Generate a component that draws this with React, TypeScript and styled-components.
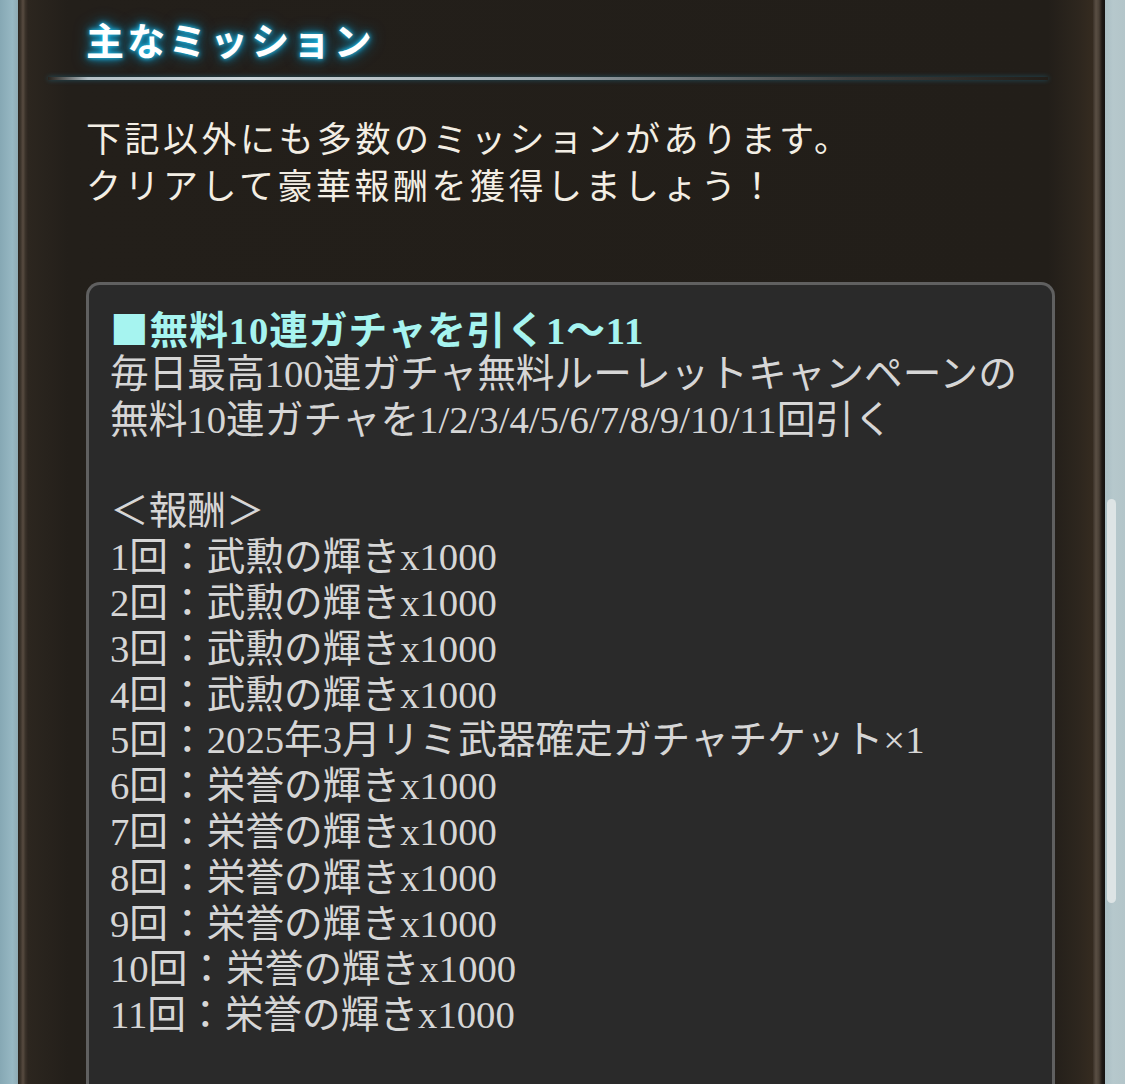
import React from "react";
import styled, { createGlobalStyle } from "styled-components";

const Global = createGlobalStyle`
  html, body { margin: 0; padding: 0; background: #221e19; }
  body { overflow: hidden; }
`;

const Page = styled.div`
  display: flex;
  width: 1125px;
  height: 1084px;
  overflow: hidden;
`;

const SideStrip = styled.div<{ $side: "left" | "right" }>`
  position: relative;
  flex: 0 0 ${(p) => (p.$side === "left" ? "18px" : "20px")};
  background: ${(p) =>
    p.$side === "left"
      ? "linear-gradient(90deg, #86a8b4 0%, #97b8c3 70%, #8eaab3 100%)"
      : "linear-gradient(90deg, #a9bec4 0%, #b6c8cc 40%, #b3c5c9 100%)"};
`;

const Thumb = styled.div`
  position: absolute;
  left: 2px;
  top: 499px;
  width: 9px;
  height: 404px;
  border-radius: 5px;
  background: #dde4e5;
`;

const FrameEdge = styled.div<{ $side: "left" | "right" }>`
  flex: 0 0 ${(p) => (p.$side === "left" ? "10px" : "12px")};
  background: ${(p) =>
    p.$side === "left"
      ? "linear-gradient(90deg, #2a241e 0%, #3b332a 25%, #574b40 50%, #3a3229 75%, #2c251f 100%)"
      : "linear-gradient(90deg, #3a3128 0%, #5a4f44 25%, #4a4036 50%, #1f1a16 75%, #141210 100%)"};
`;

const Main = styled.div`
  flex: 1;
  display: flex;
  flex-direction: column;
  background: linear-gradient(
    90deg,
    #2c261f 0px,
    #231f1a 40px,
    #221e19 1020px,
    #2d261e 1050px,
    #352b20 1065px
  );
  padding-left: 58px;
  font-family: "Noto Sans CJK JP", "Noto Sans", sans-serif;
`;

const Title = styled.h2`
  margin: 13px 0 0 0;
  font-size: 38px;
  line-height: 52px;
  font-weight: 700;
  letter-spacing: 3.3px;
  color: #ffffff;
  text-shadow: 0 0 4px #29c6f2, 0 0 9px #0e9fd0, 0 0 16px #0a7fae;
`;

const GlowLine = styled.div`
  margin: 12px 0 0 -38px;
  width: 1000px;
  height: 3px;
  background: linear-gradient(
    90deg,
    rgba(200, 210, 216, 0) 0%,
    #b4c0c6 4%,
    #cdd6da 20%,
    #9aa6ac 50%,
    rgba(90, 96, 100, 0.5) 80%,
    rgba(60, 60, 60, 0) 100%
  );
  box-shadow: 0 0 5px rgba(30, 150, 200, 0.45);
`;

const Intro = styled.p`
  margin: 33px 0 0 0;
  font-size: 35px;
  line-height: 47px;
  letter-spacing: 3.5px;
  color: #f3eee4;
`;

const Card = styled.div`
  margin-top: 75px;
  width: 969px;
  flex: 1;
  box-sizing: border-box;
  border: 3px solid #606060;
  border-bottom: none;
  border-radius: 14px 14px 0 0;
  background: #2a2a2a;
  padding: 21px 0 0 21px;
  font-family: "Liberation Serif", "Noto Sans CJK JP", serif;
  font-size: 38.7px;
  line-height: 45.8px;
  color: #d6d6d6;
`;

const Line = styled.div<{ $accent?: boolean }>`
  min-height: ${(p) => (p.$accent ? "42px" : "45.8px")};
  line-height: ${(p) => (p.$accent ? "42px" : "45.8px")};
  white-space: nowrap;
  font-weight: ${(p) => (p.$accent ? 700 : 400)};
  letter-spacing: ${(p) => (p.$accent ? "0.9px" : "0")};
  color: ${(p) => (p.$accent ? "#a6f4f0" : "#d6d6d6")};
`;

const Square = styled.span`
  font-family: "Noto Sans CJK JP", sans-serif;
  font-weight: 400;
`;

const rewards: string[] = [
  "1回：武勲の輝きx1000",
  "2回：武勲の輝きx1000",
  "3回：武勲の輝きx1000",
  "4回：武勲の輝きx1000",
  "5回：2025年3月リミ武器確定ガチャチケット×1",
  "6回：栄誉の輝きx1000",
  "7回：栄誉の輝きx1000",
  "8回：栄誉の輝きx1000",
  "9回：栄誉の輝きx1000",
  "10回：栄誉の輝きx1000",
  "11回：栄誉の輝きx1000",
];

export default function App() {
  return (
    <>
      <Global />
      <Page>
        <SideStrip $side="left" />
        <FrameEdge $side="left" />
        <Main>
          <Title>主なミッション</Title>
          <GlowLine />
          <Intro>
            下記以外にも多数のミッションがあります。
            <br />
            クリアして豪華報酬を獲得しましょう！
          </Intro>
          <Card>
            <Line $accent>
              <Square>■</Square>無料10連ガチャを引く1〜11
            </Line>
            <Line>毎日最高100連ガチャ無料ルーレットキャンペーンの</Line>
            <Line>無料10連ガチャを1/2/3/4/5/6/7/8/9/10/11回引く</Line>
            <Line />
            <Line>＜報酬＞</Line>
            {rewards.map((r) => (
              <Line key={r}>{r}</Line>
            ))}
          </Card>
        </Main>
        <FrameEdge $side="right" />
        <SideStrip $side="right">
          <Thumb />
        </SideStrip>
      </Page>
    </>
  );
}
